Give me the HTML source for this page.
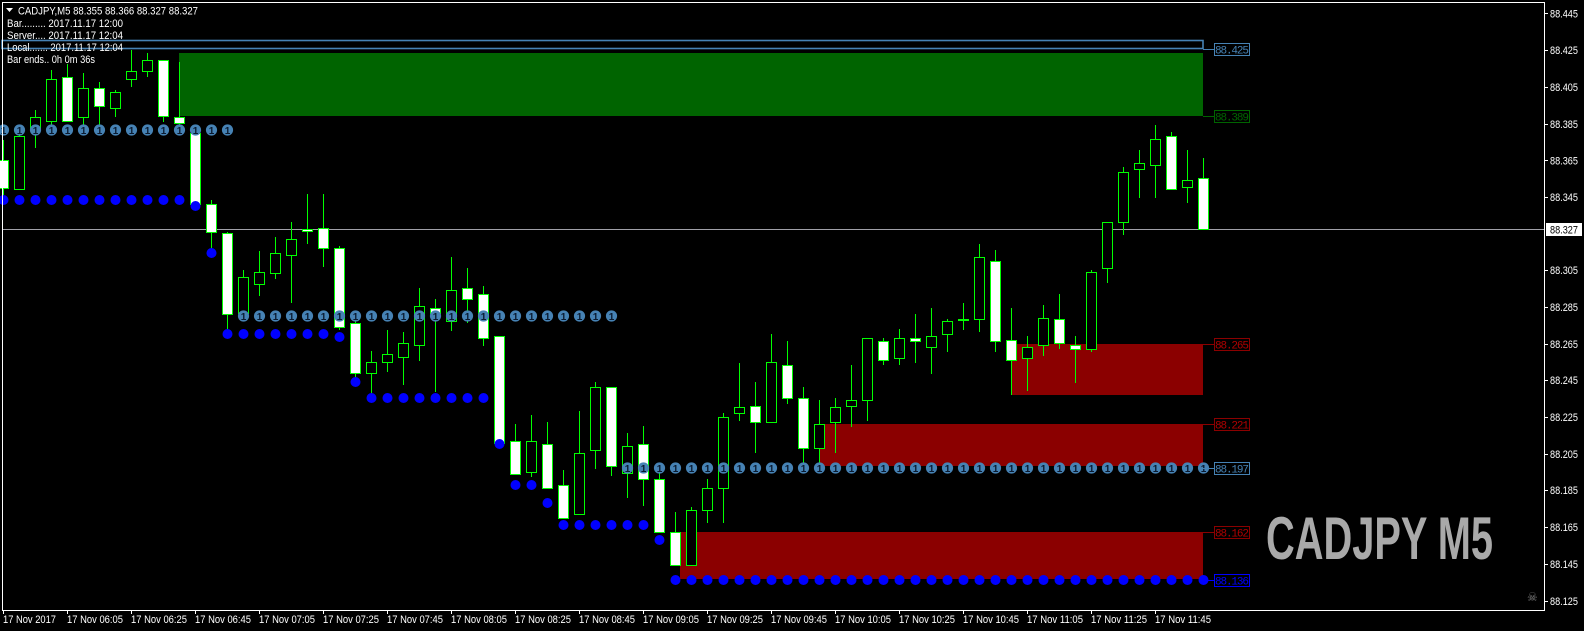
<!DOCTYPE html>
<html><head><meta charset="utf-8"><style>
html,body{margin:0;padding:0;background:#000;}
svg{display:block;}
.t{font-family:"Liberation Sans",sans-serif;font-size:11px;fill:#fff;}
.m{font-family:"Liberation Mono",monospace;font-size:11px;}
.w{fill:#fff;stroke:#00ff00;stroke-width:1;}
.b{fill:#000;stroke:#00ff00;stroke-width:1;}
.c{fill:#4682b4;}
.d{fill:#0000ff;}
</style></head><body>
<svg width="1584" height="631" viewBox="0 0 1584 631" xmlns="http://www.w3.org/2000/svg">
<rect width="1584" height="631" fill="#000"/>
<rect x="179" y="53" width="1024" height="63" fill="#006400"/>
<rect x="1011" y="344" width="192" height="51" fill="#8b0000"/>
<rect x="819" y="424" width="384" height="42" fill="#8b0000"/>
<rect x="680" y="532" width="523" height="47" fill="#8b0000"/>
<rect x="2" y="40.5" width="1201" height="8" fill="none" stroke="#4682b4" stroke-width="1.6"/>
<line x1="2" y1="229.5" x2="1544" y2="229.5" stroke="#a0a0a8" stroke-width="1"/>
<path stroke="#00ff00" stroke-width="1" fill="none" d="M3.5 140V195M19.5 128V189M35.5 110V148M51.5 70V130M67.5 64V121M83.5 73V127M99.5 82V127M115.5 90V117M131.5 50V87M147.5 53V77M163.5 60V122M179.5 62V133M195.5 130V204M211.5 200V248M227.5 232V329M243.5 270V318M259.5 251V296M275.5 237V279M291.5 222V303M307.5 194V244M323.5 194V267M339.5 246V330M355.5 317V377M371.5 351V393M387.5 330V372M403.5 332V385M419.5 288V361M435.5 299V392M451.5 257V331M467.5 268V323M483.5 286V346M499.5 336V443M515.5 424V474M531.5 415V477M547.5 422V488M563.5 470V518M579.5 411V514M595.5 382V469M611.5 387V476M627.5 433V498M643.5 426V506M659.5 472V532M675.5 512V565M691.5 507V565M707.5 479V523M723.5 413V523M739.5 363V421M755.5 382V453M771.5 334V422M787.5 341V404M803.5 387V463M819.5 400V467M835.5 398V453M851.5 365V427M867.5 338V421M883.5 338V365M899.5 329V365M915.5 314V363M931.5 308V374M947.5 319V352M963.5 303V330M979.5 244V332M995.5 250V352M1011.5 308V395M1027.5 336V391M1043.5 305V356M1059.5 294V349M1075.5 336V383M1091.5 270V352M1107.5 222V283M1123.5 167V235M1139.5 150V198M1155.5 125V198M1171.5 132V189M1187.5 150V203M1203.5 158V229"/>
<rect class="w" x="-1.5" y="160.5" width="10" height="28"/>
<rect class="b" x="14.5" y="136.5" width="10" height="53"/>
<rect class="b" x="30.5" y="117.5" width="10" height="13"/>
<rect class="b" x="46.5" y="79.5" width="10" height="42"/>
<rect class="w" x="62.5" y="77.5" width="10" height="44"/>
<rect class="b" x="78.5" y="88.5" width="10" height="29"/>
<rect class="w" x="94.5" y="88.5" width="10" height="18"/>
<rect class="b" x="110.5" y="92.5" width="10" height="16"/>
<rect class="b" x="126.5" y="71.5" width="10" height="8"/>
<rect class="b" x="142.5" y="60.5" width="10" height="11"/>
<rect class="w" x="158.5" y="60.5" width="10" height="56"/>
<rect class="w" x="174.5" y="117.5" width="10" height="6"/>
<rect class="w" x="190.5" y="133.5" width="10" height="71"/>
<rect class="w" x="206.5" y="204.5" width="10" height="28"/>
<rect class="w" x="222.5" y="233.5" width="10" height="81"/>
<rect class="b" x="238.5" y="277.5" width="10" height="36"/>
<rect class="b" x="254.5" y="272.5" width="10" height="12"/>
<rect class="b" x="270.5" y="253.5" width="10" height="20"/>
<rect class="b" x="286.5" y="239.5" width="10" height="16"/>
<rect class="w" x="302.5" y="229.5" width="10" height="2"/>
<rect class="w" x="318.5" y="228.5" width="10" height="20"/>
<rect class="w" x="334.5" y="248.5" width="10" height="79"/>
<rect class="w" x="350.5" y="323.5" width="10" height="50"/>
<rect class="b" x="366.5" y="362.5" width="10" height="11"/>
<rect class="b" x="382.5" y="354.5" width="10" height="8"/>
<rect class="b" x="398.5" y="343.5" width="10" height="14"/>
<rect class="b" x="414.5" y="306.5" width="10" height="39"/>
<rect class="w" x="430.5" y="308.5" width="10" height="5"/>
<rect class="b" x="446.5" y="290.5" width="10" height="31"/>
<rect class="w" x="462.5" y="288.5" width="10" height="11"/>
<rect class="w" x="478.5" y="294.5" width="10" height="44"/>
<rect class="w" x="494.5" y="336.5" width="10" height="107"/>
<rect class="w" x="510.5" y="441.5" width="10" height="33"/>
<rect class="b" x="526.5" y="441.5" width="10" height="31"/>
<rect class="w" x="542.5" y="444.5" width="10" height="44"/>
<rect class="w" x="558.5" y="485.5" width="10" height="33"/>
<rect class="b" x="574.5" y="453.5" width="10" height="61"/>
<rect class="b" x="590.5" y="387.5" width="10" height="63"/>
<rect class="w" x="606.5" y="387.5" width="10" height="79"/>
<rect class="b" x="622.5" y="446.5" width="10" height="27"/>
<rect class="w" x="638.5" y="444.5" width="10" height="35"/>
<rect class="w" x="654.5" y="479.5" width="10" height="53"/>
<rect class="w" x="670.5" y="532.5" width="10" height="33"/>
<rect class="b" x="686.5" y="510.5" width="10" height="55"/>
<rect class="b" x="702.5" y="488.5" width="10" height="22"/>
<rect class="b" x="718.5" y="417.5" width="10" height="71"/>
<rect class="b" x="734.5" y="407.5" width="10" height="6"/>
<rect class="w" x="750.5" y="406.5" width="10" height="16"/>
<rect class="b" x="766.5" y="362.5" width="10" height="60"/>
<rect class="w" x="782.5" y="365.5" width="10" height="33"/>
<rect class="w" x="798.5" y="398.5" width="10" height="50"/>
<rect class="b" x="814.5" y="424.5" width="10" height="24"/>
<rect class="b" x="830.5" y="407.5" width="10" height="15"/>
<rect class="b" x="846.5" y="400.5" width="10" height="6"/>
<rect class="b" x="862.5" y="338.5" width="10" height="62"/>
<rect class="w" x="878.5" y="341.5" width="10" height="19"/>
<rect class="b" x="894.5" y="338.5" width="10" height="20"/>
<rect class="w" x="910.5" y="338.5" width="10" height="3"/>
<rect class="b" x="926.5" y="336.5" width="10" height="11"/>
<rect class="b" x="942.5" y="321.5" width="10" height="13"/>
<rect class="b" x="958.5" y="319.5" width="10" height="1"/>
<rect class="b" x="974.5" y="257.5" width="10" height="62"/>
<rect class="w" x="990.5" y="261.5" width="10" height="80"/>
<rect class="w" x="1006.5" y="340.5" width="10" height="20"/>
<rect class="b" x="1022.5" y="347.5" width="10" height="11"/>
<rect class="b" x="1038.5" y="318.5" width="10" height="27"/>
<rect class="w" x="1054.5" y="319.5" width="10" height="24"/>
<rect class="w" x="1070.5" y="345.5" width="10" height="4"/>
<rect class="b" x="1086.5" y="272.5" width="10" height="77"/>
<rect class="b" x="1102.5" y="222.5" width="10" height="46"/>
<rect class="b" x="1118.5" y="172.5" width="10" height="50"/>
<rect class="b" x="1134.5" y="163.5" width="10" height="6"/>
<rect class="b" x="1150.5" y="139.5" width="10" height="26"/>
<rect class="w" x="1166.5" y="136.5" width="10" height="53"/>
<rect class="b" x="1182.5" y="180.5" width="10" height="7"/>
<rect class="w" x="1198.5" y="178.5" width="10" height="51"/>
<g class="c">
<circle cx="3.5" cy="130" r="5.6"/><circle cx="19.5" cy="130" r="5.6"/><circle cx="35.5" cy="130" r="5.6"/><circle cx="51.5" cy="130" r="5.6"/><circle cx="67.5" cy="130" r="5.6"/><circle cx="83.5" cy="130" r="5.6"/><circle cx="99.5" cy="130" r="5.6"/><circle cx="115.5" cy="130" r="5.6"/><circle cx="131.5" cy="130" r="5.6"/><circle cx="147.5" cy="130" r="5.6"/><circle cx="163.5" cy="130" r="5.6"/><circle cx="179.5" cy="130" r="5.6"/><circle cx="195.5" cy="130" r="5.6"/><circle cx="211.5" cy="130" r="5.6"/><circle cx="227.5" cy="130" r="5.6"/>
<circle cx="243.5" cy="316" r="5.6"/><circle cx="259.5" cy="316" r="5.6"/><circle cx="275.5" cy="316" r="5.6"/><circle cx="291.5" cy="316" r="5.6"/><circle cx="307.5" cy="316" r="5.6"/><circle cx="323.5" cy="316" r="5.6"/><circle cx="339.5" cy="316" r="5.6"/><circle cx="355.5" cy="316" r="5.6"/><circle cx="371.5" cy="316" r="5.6"/><circle cx="387.5" cy="316" r="5.6"/><circle cx="403.5" cy="316" r="5.6"/><circle cx="419.5" cy="316" r="5.6"/><circle cx="435.5" cy="316" r="5.6"/><circle cx="451.5" cy="316" r="5.6"/><circle cx="467.5" cy="316" r="5.6"/><circle cx="483.5" cy="316" r="5.6"/><circle cx="499.5" cy="316" r="5.6"/><circle cx="515.5" cy="316" r="5.6"/><circle cx="531.5" cy="316" r="5.6"/><circle cx="547.5" cy="316" r="5.6"/><circle cx="563.5" cy="316" r="5.6"/><circle cx="579.5" cy="316" r="5.6"/><circle cx="595.5" cy="316" r="5.6"/><circle cx="611.5" cy="316" r="5.6"/>
<circle cx="627.5" cy="468" r="5.6"/><circle cx="643.5" cy="468" r="5.6"/><circle cx="659.5" cy="468" r="5.6"/><circle cx="675.5" cy="468" r="5.6"/><circle cx="691.5" cy="468" r="5.6"/><circle cx="707.5" cy="468" r="5.6"/><circle cx="723.5" cy="468" r="5.6"/><circle cx="739.5" cy="468" r="5.6"/><circle cx="755.5" cy="468" r="5.6"/><circle cx="771.5" cy="468" r="5.6"/><circle cx="787.5" cy="468" r="5.6"/><circle cx="803.5" cy="468" r="5.6"/><circle cx="819.5" cy="468" r="5.6"/><circle cx="835.5" cy="468" r="5.6"/><circle cx="851.5" cy="468" r="5.6"/><circle cx="867.5" cy="468" r="5.6"/><circle cx="883.5" cy="468" r="5.6"/><circle cx="899.5" cy="468" r="5.6"/><circle cx="915.5" cy="468" r="5.6"/><circle cx="931.5" cy="468" r="5.6"/><circle cx="947.5" cy="468" r="5.6"/><circle cx="963.5" cy="468" r="5.6"/><circle cx="979.5" cy="468" r="5.6"/><circle cx="995.5" cy="468" r="5.6"/><circle cx="1011.5" cy="468" r="5.6"/><circle cx="1027.5" cy="468" r="5.6"/><circle cx="1043.5" cy="468" r="5.6"/><circle cx="1059.5" cy="468" r="5.6"/><circle cx="1075.5" cy="468" r="5.6"/><circle cx="1091.5" cy="468" r="5.6"/><circle cx="1107.5" cy="468" r="5.6"/><circle cx="1123.5" cy="468" r="5.6"/><circle cx="1139.5" cy="468" r="5.6"/><circle cx="1155.5" cy="468" r="5.6"/><circle cx="1171.5" cy="468" r="5.6"/><circle cx="1187.5" cy="468" r="5.6"/><circle cx="1203.5" cy="468" r="5.6"/>
</g>
<g font-family="Liberation Sans,sans-serif" font-size="10" font-weight="bold" fill="#0a1a30" text-anchor="middle">
<text y="133.8" x="3.5 19.5 35.5 51.5 67.5 83.5 99.5 115.5 131.5 147.5 163.5 179.5 195.5 211.5 227.5">111111111111111</text>
<text y="319.8" x="243.5 259.5 275.5 291.5 307.5 323.5 339.5 355.5 371.5 387.5 403.5 419.5 435.5 451.5 467.5 483.5 499.5 515.5 531.5 547.5 563.5 579.5 595.5 611.5">111111111111111111111111</text>
<text y="471.8" x="627.5 643.5 659.5 675.5 691.5 707.5 723.5 739.5 755.5 771.5 787.5 803.5 819.5 835.5 851.5 867.5 883.5 899.5 915.5 931.5 947.5 963.5 979.5 995.5 1011.5 1027.5 1043.5 1059.5 1075.5 1091.5 1107.5 1123.5 1139.5 1155.5 1171.5 1187.5 1203.5">1111111111111111111111111111111111111</text>
</g>
<g class="d">
<circle cx="3.5" cy="200" r="5"/><circle cx="19.5" cy="200" r="5"/><circle cx="35.5" cy="200" r="5"/><circle cx="51.5" cy="200" r="5"/><circle cx="67.5" cy="200" r="5"/><circle cx="83.5" cy="200" r="5"/><circle cx="99.5" cy="200" r="5"/><circle cx="115.5" cy="200" r="5"/><circle cx="131.5" cy="200" r="5"/><circle cx="147.5" cy="200" r="5"/><circle cx="163.5" cy="200" r="5"/><circle cx="179.5" cy="200" r="5"/>
<circle cx="195.5" cy="206" r="5"/><circle cx="211.5" cy="253" r="5"/>
<circle cx="227.5" cy="334" r="5"/><circle cx="243.5" cy="334" r="5"/><circle cx="259.5" cy="334" r="5"/><circle cx="275.5" cy="334" r="5"/><circle cx="291.5" cy="334" r="5"/><circle cx="307.5" cy="334" r="5"/><circle cx="323.5" cy="334" r="5"/><circle cx="339.5" cy="337" r="5"/>
<circle cx="355.5" cy="382" r="5"/>
<circle cx="371.5" cy="398" r="5"/><circle cx="387.5" cy="398" r="5"/><circle cx="403.5" cy="398" r="5"/><circle cx="419.5" cy="398" r="5"/><circle cx="435.5" cy="398" r="5"/><circle cx="451.5" cy="398" r="5"/><circle cx="467.5" cy="398" r="5"/><circle cx="483.5" cy="398" r="5"/>
<circle cx="499.5" cy="444" r="5"/><circle cx="515.5" cy="485" r="5"/><circle cx="531.5" cy="485" r="5"/><circle cx="547.5" cy="503" r="5"/>
<circle cx="563.5" cy="525" r="5"/><circle cx="579.5" cy="525" r="5"/><circle cx="595.5" cy="525" r="5"/><circle cx="611.5" cy="525" r="5"/><circle cx="627.5" cy="525" r="5"/><circle cx="643.5" cy="525" r="5"/>
<circle cx="659.5" cy="540" r="5"/>
<circle cx="675.5" cy="580" r="5"/><circle cx="691.5" cy="580" r="5"/><circle cx="707.5" cy="580" r="5"/><circle cx="723.5" cy="580" r="5"/><circle cx="739.5" cy="580" r="5"/><circle cx="755.5" cy="580" r="5"/><circle cx="771.5" cy="580" r="5"/><circle cx="787.5" cy="580" r="5"/><circle cx="803.5" cy="580" r="5"/><circle cx="819.5" cy="580" r="5"/><circle cx="835.5" cy="580" r="5"/><circle cx="851.5" cy="580" r="5"/><circle cx="867.5" cy="580" r="5"/><circle cx="883.5" cy="580" r="5"/><circle cx="899.5" cy="580" r="5"/><circle cx="915.5" cy="580" r="5"/><circle cx="931.5" cy="580" r="5"/><circle cx="947.5" cy="580" r="5"/><circle cx="963.5" cy="580" r="5"/><circle cx="979.5" cy="580" r="5"/><circle cx="995.5" cy="580" r="5"/><circle cx="1011.5" cy="580" r="5"/><circle cx="1027.5" cy="580" r="5"/><circle cx="1043.5" cy="580" r="5"/><circle cx="1059.5" cy="580" r="5"/><circle cx="1075.5" cy="580" r="5"/><circle cx="1091.5" cy="580" r="5"/><circle cx="1107.5" cy="580" r="5"/><circle cx="1123.5" cy="580" r="5"/><circle cx="1139.5" cy="580" r="5"/><circle cx="1155.5" cy="580" r="5"/><circle cx="1171.5" cy="580" r="5"/><circle cx="1187.5" cy="580" r="5"/><circle cx="1203.5" cy="580" r="5"/>
</g>
<g fill="none" stroke-width="1">
<path stroke="#4682b4" d="M1203 49.5H1214M1203 468.5H1214"/>
<rect x="1214.5" y="43.5" width="35" height="12" stroke="#4682b4"/>
<rect x="1214.5" y="462.5" width="35" height="12" stroke="#4682b4"/>
<path stroke="#006400" d="M1203 116.5H1214"/>
<rect x="1214.5" y="110.5" width="35" height="12" stroke="#006400"/>
<path stroke="#8b0000" d="M1203 344.5H1214M1203 424.5H1214M1203 532.5H1214"/>
<rect x="1214.5" y="338.5" width="35" height="12" stroke="#8b0000"/>
<rect x="1214.5" y="418.5" width="35" height="12" stroke="#8b0000"/>
<rect x="1214.5" y="526.5" width="35" height="12" stroke="#8b0000"/>
<path stroke="#0000ff" d="M1203 580.5H1214"/>
<rect x="1214.5" y="574.5" width="35" height="12" stroke="#0000ff"/>
</g>
<g class="m">
<text x="1215" y="53.5" fill="#4682b4" textLength="34">88.425</text>
<text x="1215" y="120.5" fill="#006400" textLength="34">88.389</text>
<text x="1215" y="348.5" fill="#b00000" textLength="34">88.265</text>
<text x="1215" y="428.5" fill="#b00000" textLength="34">88.221</text>
<text x="1215" y="472.5" fill="#4682b4" textLength="34">88.197</text>
<text x="1215" y="536.5" fill="#b00000" textLength="34">88.162</text>
<text x="1215" y="584.5" fill="#0000ff" textLength="34">88.136</text>
</g>
<text x="1266" y="559" font-family="Liberation Sans Narrow,Liberation Sans,sans-serif" font-weight="bold" font-size="60" fill="#a9a9a9" textLength="227" lengthAdjust="spacingAndGlyphs">CADJPY M5</text>
<text x="1527" y="601" font-family="DejaVu Sans,sans-serif" font-size="12" fill="#808080">☠</text>
<path d="M2.5 2.5H1544.5V610.5H2.5Z" fill="none" stroke="#fff" stroke-width="1"/>
<path d="M6 8h7l-3.5 4z" fill="#fff"/>
<text class="t" x="18" y="14.5" textLength="180" lengthAdjust="spacingAndGlyphs">CADJPY,M5  88.355 88.366 88.327 88.327</text>
<text class="t" x="7" y="27" textLength="116" lengthAdjust="spacingAndGlyphs">Bar......... 2017.11.17 12:00</text>
<text class="t" x="7" y="39" textLength="116" lengthAdjust="spacingAndGlyphs">Server.... 2017.11.17 12:04</text>
<text class="t" x="7" y="51" textLength="116" lengthAdjust="spacingAndGlyphs">Local....... 2017.11.17 12:04</text>
<text class="t" x="7" y="63" textLength="88" lengthAdjust="spacingAndGlyphs">Bar ends.. 0h 0m 36s</text>
<g stroke="#fff"><path d="M1544 13.5h4M1544 50.5h4M1544 87.5h4M1544 124.5h4M1544 160.5h4M1544 197.5h4M1544 270.5h4M1544 307.5h4M1544 344.5h4M1544 380.5h4M1544 417.5h4M1544 454.5h4M1544 490.5h4M1544 527.5h4M1544 564.5h4M1544 601.5h4"/></g>
<g class="t">
<text x="1550" y="17.5" textLength="28" lengthAdjust="spacingAndGlyphs">88.445</text>
<text x="1550" y="54" textLength="28" lengthAdjust="spacingAndGlyphs">88.425</text>
<text x="1550" y="91" textLength="28" lengthAdjust="spacingAndGlyphs">88.405</text>
<text x="1550" y="128" textLength="28" lengthAdjust="spacingAndGlyphs">88.385</text>
<text x="1550" y="164.5" textLength="28" lengthAdjust="spacingAndGlyphs">88.365</text>
<text x="1550" y="201" textLength="28" lengthAdjust="spacingAndGlyphs">88.345</text>
<text x="1550" y="274" textLength="28" lengthAdjust="spacingAndGlyphs">88.305</text>
<text x="1550" y="311" textLength="28" lengthAdjust="spacingAndGlyphs">88.285</text>
<text x="1550" y="348" textLength="28" lengthAdjust="spacingAndGlyphs">88.265</text>
<text x="1550" y="384" textLength="28" lengthAdjust="spacingAndGlyphs">88.245</text>
<text x="1550" y="421" textLength="28" lengthAdjust="spacingAndGlyphs">88.225</text>
<text x="1550" y="458" textLength="28" lengthAdjust="spacingAndGlyphs">88.205</text>
<text x="1550" y="494" textLength="28" lengthAdjust="spacingAndGlyphs">88.185</text>
<text x="1550" y="531" textLength="28" lengthAdjust="spacingAndGlyphs">88.165</text>
<text x="1550" y="568" textLength="28" lengthAdjust="spacingAndGlyphs">88.145</text>
<text x="1550" y="605" textLength="28" lengthAdjust="spacingAndGlyphs">88.125</text>
</g>
<rect x="1546" y="223" width="36" height="13" fill="#fff"/>
<text x="1550" y="233.5" font-family="Liberation Sans,sans-serif" font-size="11" fill="#000" textLength="28" lengthAdjust="spacingAndGlyphs">88.327</text>
<path stroke="#fff" d="M3.5 610v4M67.5 610v4M131.5 610v4M195.5 610v4M259.5 610v4M323.5 610v4M387.5 610v4M451.5 610v4M515.5 610v4M579.5 610v4M643.5 610v4M707.5 610v4M771.5 610v4M835.5 610v4M899.5 610v4M963.5 610v4M1027.5 610v4M1091.5 610v4M1155.5 610v4"/>
<g class="t">
<text x="3" y="623" textLength="53" lengthAdjust="spacingAndGlyphs">17 Nov 2017</text>
<text x="67" y="623" textLength="56" lengthAdjust="spacingAndGlyphs">17 Nov 06:05</text>
<text x="131" y="623" textLength="56" lengthAdjust="spacingAndGlyphs">17 Nov 06:25</text>
<text x="195" y="623" textLength="56" lengthAdjust="spacingAndGlyphs">17 Nov 06:45</text>
<text x="259" y="623" textLength="56" lengthAdjust="spacingAndGlyphs">17 Nov 07:05</text>
<text x="323" y="623" textLength="56" lengthAdjust="spacingAndGlyphs">17 Nov 07:25</text>
<text x="387" y="623" textLength="56" lengthAdjust="spacingAndGlyphs">17 Nov 07:45</text>
<text x="451" y="623" textLength="56" lengthAdjust="spacingAndGlyphs">17 Nov 08:05</text>
<text x="515" y="623" textLength="56" lengthAdjust="spacingAndGlyphs">17 Nov 08:25</text>
<text x="579" y="623" textLength="56" lengthAdjust="spacingAndGlyphs">17 Nov 08:45</text>
<text x="643" y="623" textLength="56" lengthAdjust="spacingAndGlyphs">17 Nov 09:05</text>
<text x="707" y="623" textLength="56" lengthAdjust="spacingAndGlyphs">17 Nov 09:25</text>
<text x="771" y="623" textLength="56" lengthAdjust="spacingAndGlyphs">17 Nov 09:45</text>
<text x="835" y="623" textLength="56" lengthAdjust="spacingAndGlyphs">17 Nov 10:05</text>
<text x="899" y="623" textLength="56" lengthAdjust="spacingAndGlyphs">17 Nov 10:25</text>
<text x="963" y="623" textLength="56" lengthAdjust="spacingAndGlyphs">17 Nov 10:45</text>
<text x="1027" y="623" textLength="56" lengthAdjust="spacingAndGlyphs">17 Nov 11:05</text>
<text x="1091" y="623" textLength="56" lengthAdjust="spacingAndGlyphs">17 Nov 11:25</text>
<text x="1155" y="623" textLength="56" lengthAdjust="spacingAndGlyphs">17 Nov 11:45</text>
</g>
</svg>
</body></html>
